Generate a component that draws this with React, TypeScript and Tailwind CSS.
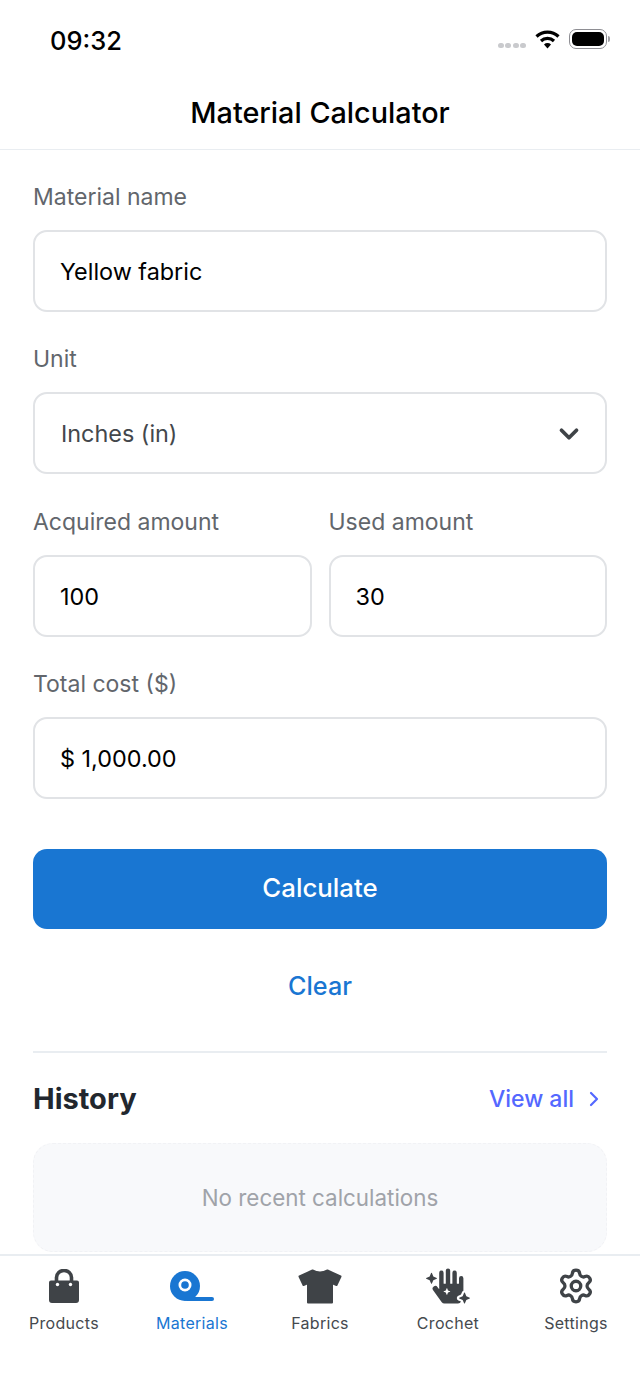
import { ChevronDown, ChevronRight, Settings } from "lucide-react";
import { FaHandSparkles } from "react-icons/fa";

const inputBox =
  "flex h-[82px] items-center rounded-[14px] border-2 border-[#e1e3e6] bg-white px-[25px] pt-[1px] text-[23.4px]";
const labelText = "mb-[16px] h-[34px] text-[23px] leading-[34px] text-[#62666c]";

function Field({ label, value, className }: { label: string; value: string; className?: string }) {
  return (
    <div className={className}>
      <div className={labelText}>{label}</div>
      <div className={`${inputBox} text-black`}>{value}</div>
    </div>
  );
}

function BagIcon() {
  return (
    <svg width="32" height="35" viewBox="0 0 32 35">
      <path
        d="M3 11.5h26a2 2 0 0 1 2 2V31a3 3 0 0 1-3 3H4a3 3 0 0 1-3-3V13.5a2 2 0 0 1 2-2z"
        fill="#3f4347"
      />
      <path d="M8.5 14V8.5a7.5 7 0 0 1 15 0V14" fill="none" stroke="#3f4347" strokeWidth="3.6" />
      <circle cx="9.5" cy="15.5" r="1.7" fill="#fff" />
      <circle cx="22.5" cy="15.5" r="1.7" fill="#fff" />
    </svg>
  );
}

function TapeIcon() {
  return (
    <svg width="44" height="32" viewBox="0 0 44 32">
      <circle cx="15" cy="16" r="15" fill="#1976d2" />
      <rect x="15" y="27" width="29" height="4" rx="2" fill="#1976d2" />
      <circle cx="15" cy="15" r="6.5" fill="#fff" />
      <circle cx="15" cy="15" r="3.8" fill="#1976d2" />
    </svg>
  );
}

function ShirtIcon() {
  return (
    <svg width="44" height="35" viewBox="0 0 44 35">
      <path
        d="M14.5 1.5Q22 5.5 29.5 1.5L42.5 7.5L38.5 16L34 14V33.5H10V14L5.5 16L1.5 7.5Z"
        fill="#3f4347"
        stroke="#3f4347"
        strokeWidth="2"
        strokeLinejoin="round"
      />
    </svg>
  );
}

function NavItem({ label, icon, active }: { label: string; icon: React.ReactNode; active?: boolean }) {
  return (
    <div className="flex flex-col items-center">
      <div className="flex h-[36px] items-center justify-center">{icon}</div>
      <div
        className={`mt-[7px] text-[16px] leading-[24px] tracking-[0.3px] ${active ? "text-[#1976d2]" : "text-[#45494e]"}`}
      >
        {label}
      </div>
    </div>
  );
}

export default function App() {
  return (
    <div className="flex h-[1385px] w-[640px] flex-col overflow-hidden bg-white font-['Inter',sans-serif]">
      {/* Status bar */}
      <div className="flex h-[77px] items-start justify-between pt-[25px] pr-[30px] pl-[50px]">
        <span className="text-[25.5px] leading-[32px] font-medium text-black">09:32</span>
        <div className="flex items-center gap-[8px] pt-[4px]">
          <div className="mt-[12px] flex gap-[1.5px]">
            <span className="h-[5px] w-[6px] rounded-full bg-[#c9cacd]" />
            <span className="h-[5px] w-[6px] rounded-full bg-[#c9cacd]" />
            <span className="h-[5px] w-[6px] rounded-full bg-[#c9cacd]" />
            <span className="h-[5px] w-[6px] rounded-full bg-[#c9cacd]" />
          </div>
          <svg width="27" height="20" viewBox="0 0 26 20">
            <path d="M2 7.5a16 16 0 0 1 22 0" fill="none" stroke="#000" strokeWidth="3.2" />
            <path d="M6.5 12a9.5 9.5 0 0 1 13 0" fill="none" stroke="#000" strokeWidth="3.2" />
            <path d="M9.5 15.5a5 5 0 0 1 7 0L13 19.5z" fill="#000" />
          </svg>
          <div className="flex items-center gap-[1px]">
            <div className="h-[20px] w-[38px] rounded-[7px] border border-[#8e8e93] p-[2px]">
              <div className="h-full w-full rounded-[5px] bg-black" />
            </div>
            <span className="h-[6px] w-[2px] rounded-r-full bg-[#a0a0a4]" />
          </div>
        </div>
      </div>

      {/* Header */}
      <div className="flex h-[73px] items-center justify-center border-b border-[#e9edf1] text-[28.8px] font-[550] text-black">
        Material Calculator
      </div>

      {/* Form */}
      <div className="flex min-h-0 flex-1 flex-col px-[33px] pt-[30px]">
        <Field label="Material name" value="Yellow fabric" />

        <div className="mt-[30px]">
          <div className={labelText}>Unit</div>
          <div className={`${inputBox} justify-between text-[#43474c]`}>
            <span className="pl-px">Inches (in)</span>
            <ChevronDown size={30} strokeWidth={3} className="-mr-[4px] text-[#3f4347]" />
          </div>
        </div>

        <div className="mt-[31px] flex gap-[17px]">
          <Field label="Acquired amount" value="100" className="flex-1" />
          <Field label="Used amount" value="30" className="flex-1" />
        </div>

        <Field label="Total cost ($)" value="$ 1,000.00" className="mt-[30px]" />

        <div className="mt-[50px] flex h-[80px] items-center justify-center rounded-[14px] bg-[#1976d2] pb-px text-[25.8px] font-[550] text-white">
          Calculate
        </div>

        <div className="mt-[37px] text-center text-[25.2px] leading-[40px] font-[550] text-[#1976d2]">Clear</div>

        <div className="mt-[45px] h-[2px] bg-[#e9edf1]" />

        <div className="mt-[26px] flex h-[40px] items-center justify-between">
          <span className="text-[29px] font-bold text-[#22272e]">History</span>
          <div className="flex items-center gap-[8px] pr-[1px] text-[23px] font-medium text-[#5468ff]">
            View all
            <ChevronRight size={24} strokeWidth={2.2} />
          </div>
        </div>

        <div className="mt-[24px] flex h-[109px] items-center justify-center rounded-[20px] border border-dashed border-[#f1f2f5] bg-[#f8f9fb] text-[22.4px] text-[#a0a3a9]">
          No recent calculations
        </div>
      </div>

      {/* Tab bar */}
      <div className="grid h-[131px] grid-cols-5 border-t-2 border-[#e9edf1] pt-[12px]">
        <NavItem label="Products" icon={<BagIcon />} />
        <NavItem label="Materials" icon={<TapeIcon />} active />
        <NavItem label="Fabrics" icon={<ShirtIcon />} />
        <NavItem label="Crochet" icon={<FaHandSparkles size={44} color="#3f4347" />} />
        <NavItem label="Settings" icon={<Settings size={38} strokeWidth={2.1} color="#3f4347" />} />
      </div>
    </div>
  );
}
